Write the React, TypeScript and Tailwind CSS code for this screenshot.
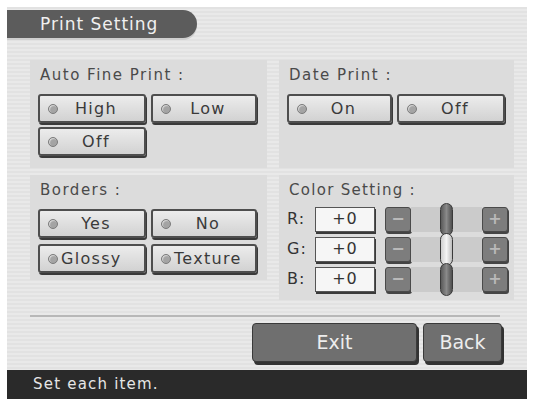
import React from "react";

const font = { fontFamily: '"DejaVu Sans", "Liberation Sans", sans-serif' };

function Dot() {
  return (
    <span className="block w-[10px] h-[10px] rounded-full bg-[#a4a4a4] border border-[#7c7c7c] shadow-[inset_1px_1px_1px_rgba(255,255,255,0.6)] shrink-0" />
  );
}

function Opt({ label, center = true }: { label: string; center?: boolean }) {
  return (
    <div className="h-[29px] rounded-[3px] border-2 border-[#4e4e4e] bg-gradient-to-b from-[#ececec] to-[#d2d2d2] shadow-[1px_2px_0_#3a3a3a] flex items-center pl-[8px] pr-[2px]">
      <Dot />
      <span
        className={`${center ? "flex-1 text-center pr-[8px]" : "pl-[3px]"} text-[16px] text-[#3a3a3a] leading-none tracking-[1.3px] whitespace-nowrap`}
      >
        {label}
      </span>
    </div>
  );
}

function Panel({ title, children, h }: { title: string; children: React.ReactNode; h: string }) {
  return (
    <div className={`bg-[#dcdcdc] ${h} pt-[8px] pl-[8px] pr-[10px]`}>
      <div className="pl-[2px] text-[15px] text-[#4a4a4a] leading-none h-[16px] mb-[10px] tracking-[1.5px] whitespace-nowrap">{title}</div>
      {children}
    </div>
  );
}

function SmallBtn({ sym }: { sym: string }) {
  return (
    <div className="w-[26px] h-[25px] rounded-[3px] bg-[#7d7d7d] border border-[#4a4a4a] shadow-[1px_2px_0_#444] flex items-center justify-center text-[#b9b9b9] text-[16px] leading-none font-bold">
      {sym}
    </div>
  );
}

function ColorRow({ label, light }: { label: string; light?: boolean }) {
  return (
    <div className="flex items-center h-[30px]">
      <span className="w-[28px] text-[16px] text-[#333] leading-none tracking-[1px]">{label}</span>
      <div className="w-[60px] h-[25px] bg-[#f6f6f6] border border-[#555] shadow-[1px_2px_0_#3a3a3a] flex items-center justify-center text-[16px] text-[#333] leading-none tracking-[1px]">
        +0
      </div>
      <div className="ml-[10px] flex items-center">
        <SmallBtn sym="−" />
        <div className="relative w-[71px] h-[25px] bg-[#cbcbcb]">
          <div
            className={`absolute left-[29px] top-[-4px] w-[13px] h-[33px] rounded-full border border-[#3a3a3a] ${
              light ? "bg-gradient-to-r from-[#cfcfcf] via-[#f4f4f4] to-[#bdbdbd]" : "bg-gradient-to-r from-[#5a5a5a] via-[#8a8a8a] to-[#505050]"
            }`}
          />
        </div>
        <SmallBtn sym="+" />
      </div>
    </div>
  );
}

export default function App() {
  return (
    <div className="w-[534px] h-[401px] bg-white pt-[7px] pl-[7px] pr-[7px] pb-[2px]" style={font}>
      <div className="w-[520px] h-[392px] bg-[repeating-linear-gradient(0deg,#e9e9e9_0px,#e9e9e9_2px,#e2e2e2_2px,#e2e2e2_4px)] flex flex-col">
        <div className="mt-[3px] w-[190px] h-[28px] bg-[#5c5c5c] rounded-r-full flex items-center pl-[33px] text-[17px] text-[#f0f0f0] leading-none tracking-[1px] shadow-[0_2px_0_#cfcfcf]">
          Print Setting
        </div>
        <div className="mt-[22px] ml-[23px] grid grid-cols-[237px_235px] gap-x-[12px] gap-y-[7px] items-start">
          <Panel title="Auto Fine Print :" h="h-[108px]">
            <div className="grid grid-cols-[108px_106px] gap-x-[5px] gap-y-[4px]">
              <Opt label="High" />
              <Opt label="Low" />
              <Opt label="Off" />
            </div>
          </Panel>
          <Panel title="Date Print :" h="h-[108px]">
            <div className="grid grid-cols-[105px_108px] gap-x-[5px]">
              <Opt label="On" />
              <Opt label="Off" />
            </div>
          </Panel>
          <Panel title="Borders :" h="h-[105px]">
            <div className="grid grid-cols-[108px_106px] gap-x-[5px] gap-y-[6px]">
              <Opt label="Yes" />
              <Opt label="No" />
              <Opt label="Glossy" center={false} />
              <Opt label="Texture" center={false} />
            </div>
          </Panel>
          <div className="bg-[#dcdcdc] h-[125px] pt-[8px] pl-[8px]">
            <div className="pl-[2px] text-[15px] text-[#4a4a4a] leading-none h-[16px] mb-[5px] tracking-[1.3px]">Color Setting :</div>
            <ColorRow label="R:" />
            <ColorRow label="G:" light />
            <ColorRow label="B:" />
          </div>
        </div>
        <div className="mt-[15px] ml-[23px] w-[470px] h-[2px] bg-[#b8b8b8]" />
        <div className="mt-[6px] flex justify-end pr-[25px] gap-[6px]">
          <div className="w-[165px] h-[39px] rounded-[4px] bg-[#6f6f6f] border border-[#3a3a3a] shadow-[2px_3px_0_#333] flex items-center justify-center text-[19px] text-[#ededed] leading-none">
            Exit
          </div>
          <div className="w-[79px] h-[39px] rounded-[4px] bg-[#6f6f6f] border border-[#3a3a3a] shadow-[2px_3px_0_#333] flex items-center justify-center text-[19px] text-[#ededed] leading-none">
            Back
          </div>
        </div>
        <div className="mt-auto h-[29px] bg-[#2a2a2a] flex items-center pl-[26px] text-[15px] text-[#e6e6e6] leading-none tracking-[1.2px]">
          Set each item.
        </div>
      </div>
    </div>
  );
}
